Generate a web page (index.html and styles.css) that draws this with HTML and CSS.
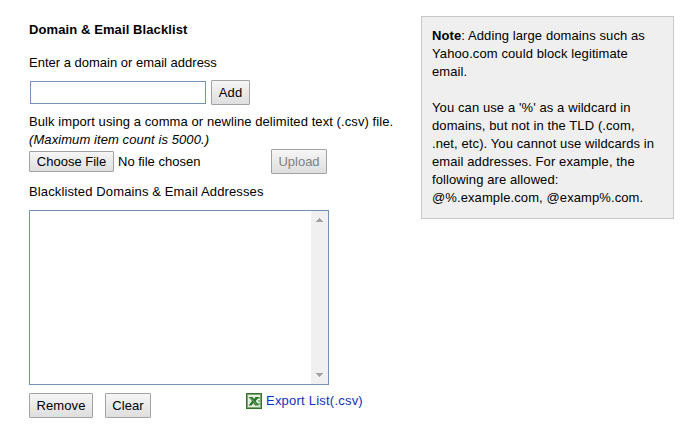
FILE: index.html
```
<!DOCTYPE html>
<html lang="en">
<head>
<meta charset="utf-8">
<title>Domain &amp; Email Blacklist</title>
<link rel="stylesheet" href="styles.css">
</head>
<body>
<div class="page">
  <main class="settings">
    <h1 class="title"><span>Domain &amp; Email Blacklist</span></h1>
    <label class="entry-label" for="entry">Enter a domain or email address</label>
    <div class="entry-row">
      <input class="entry" id="entry" type="text">
      <button class="btn add">Add</button>
    </div>
    <p class="bulk">Bulk import using a comma or newline delimited text (.csv) file.<br><em>(Maximum item count is 5000.)</em></p>
    <div class="upload-row">
      <button class="btn choose">Choose File</button>
      <span class="filename">No file chosen</span>
      <button class="btn upload" disabled>Upload</button>
    </div>
    <div class="list-label">Blacklisted Domains &amp; Email Addresses</div>
    <div class="list">
      <div class="scrollbar">
        <svg width="7" height="4" viewBox="0 0 7 4" shape-rendering="crispEdges"><path d="M3 0h1v1h1v1h1v1h1v1H0V3h1V2h1V1h1z"/></svg>
        <svg width="7" height="4" viewBox="0 0 7 4" shape-rendering="crispEdges"><path d="M0 0h7v1H6v1H5v1H4v1H3V3H2V2H1V1H0z"/></svg>
      </div>
    </div>
    <div class="actions">
      <button class="btn remove">Remove</button>
      <button class="btn clear">Clear</button>
      <a class="export">
        <svg width="16" height="16" viewBox="0 0 16 16">
          <rect width="16" height="16" fill="#35702f"/>
          <rect x="1" y="1" width="14" height="14" fill="#7da675"/>
          <rect x="2" y="2" width="12" height="12" fill="#e6f0e0"/>
          <path d="M10 4h4v2h-3zM12 7h2v2h-2zM11 10h3v2h-2z" fill="#8dbb83"/>
          <path d="M2.5 4h4l1.5 2L9.500 4H13L9.700 8l3.300 4.500H9L7.500 10 5.500 12.500h-3L6 8z" fill="#2b742c"/>
          <path d="M4 4.500l6.500 7" stroke="#8fbe86" stroke-width=".8"/>
        </svg>
        <span>Export List(.csv)</span>
      </a>
    </div>
  </main>
  <aside class="note"><b>Note</b>: Adding large domains such as<br>Yahoo.com could block legitimate<br>email.<br><br>You can use a '%' as a wildcard in<br>domains, but not in the TLD (.com,<br>.net, etc). You cannot use wildcards in<br>email addresses. For example, the<br>following are allowed:<br>@%.example.com, @examp%.com.</aside>
</div>
</body>
</html>
```
FILE: styles.css
```
* { box-sizing: border-box; }
body {
  margin: 0;
  background: #fff;
  color: #000;
  font: 13px/18px "Liberation Sans", Arial, sans-serif;
  letter-spacing: 0.1px;
}
.page {
  display: flex;
  align-items: flex-start;
  padding: 16px 0 0 29px;
  white-space: nowrap;
}
.settings {
  display: flex;
  flex-direction: column;
  width: 392px;
  padding-top: 5px;
}
.title { margin: 0 0 15px; font-size: 13px; line-height: 18px; }
.entry-label { margin-bottom: 8px; letter-spacing: 0; }
.entry-row { display: flex; align-items: center; gap: 5px; height: 25px; padding-left: 1px; }
.entry { width: 176px; height: 23px; border: 1px solid #7292b8; padding: 2px; outline: 0; }
.btn {
  flex: none;
  height: 25px;
  padding: 0;
  border: 1px solid #a2a2a2;
  border-radius: 1px;
  background: linear-gradient(#f6f6f6, #dedede);
  color: #000;
  font: inherit;
  letter-spacing: inherit;
  text-align: center;
}
.add { width: 39px; }
.bulk { margin: 8px 0 0; letter-spacing: 0.08px; }
.upload-row { display: flex; align-items: center; height: 25px; }
.choose { width: 85px; height: 21px; line-height: 18px; letter-spacing: 0; }
.filename { width: 153px; margin-left: 4px; letter-spacing: 0; }
.upload { width: 56px; color: #808080; letter-spacing: 0; }
.list-label { margin: 9px 0 9px; letter-spacing: 0.13px; }
.list {
  display: flex;
  justify-content: flex-end;
  width: 300px;
  height: 175px;
  border: 1px solid #7292b8;
}
.scrollbar {
  display: flex;
  flex-direction: column;
  align-items: center;
  justify-content: space-between;
  width: 17px;
  padding: 7px 0;
  background: #f0f0f0;
  fill: #a3a3a3;
}
.actions { display: flex; align-items: flex-start; margin-top: 8px; }
.remove { width: 64px; }
.clear { width: 46px; margin-left: 12px; }
.export { display: flex; gap: 4px; margin-left: 95px; color: #1030c0; letter-spacing: 0.22px; }
.export span { margin-top: -1px; }
.note {
  width: 253px;
  padding: 10px 10px 11px;
  border: 1px solid #c8c8c8;
  background: #efefef;
}
```
